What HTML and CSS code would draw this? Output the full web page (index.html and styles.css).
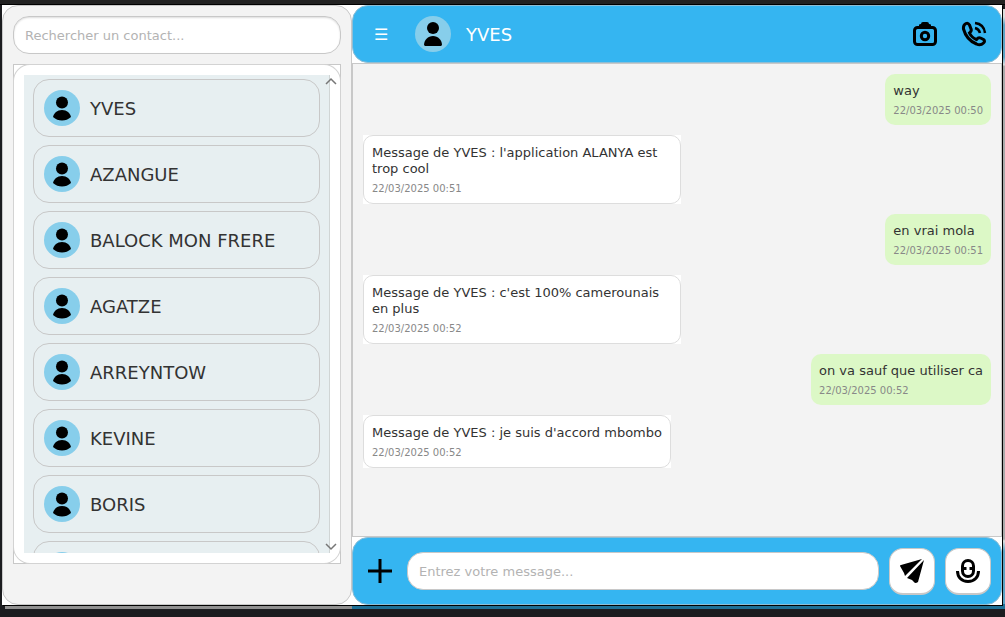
FILE: index.html
```html
<!DOCTYPE html>
<html lang="fr">
<head>
<meta charset="utf-8">
<title>Messagerie</title>
<link rel="stylesheet" href="styles.css">
</head>
<body>
<svg class="defs" aria-hidden="true">
  <symbol id="person" viewBox="0 0 36 36"><circle cx="18" cy="12.500" r="6"/><path d="M9 27c1-4 4-7 9-7s8 3 9 7q-4 3.500-9 3.500T9 27z"/></symbol>
</svg>
<div class="window">
  <aside class="sidebar">
    <input class="field" type="search" aria-label="Rechercher un contact" placeholder="Rechercher un contact...">
    <div class="list-frame">
      <div class="list-round">
        <div class="list">
          <button class="contact"><svg class="avatar"><use href="#person"/></svg>YVES</button>
          <button class="contact"><svg class="avatar"><use href="#person"/></svg>AZANGUE</button>
          <button class="contact"><svg class="avatar"><use href="#person"/></svg>BALOCK MON FRERE</button>
          <button class="contact"><svg class="avatar"><use href="#person"/></svg>AGATZE</button>
          <button class="contact"><svg class="avatar"><use href="#person"/></svg>ARREYNTOW</button>
          <button class="contact"><svg class="avatar"><use href="#person"/></svg>KEVINE</button>
          <button class="contact"><svg class="avatar"><use href="#person"/></svg>BORIS</button>
          <button class="contact" aria-label="Contact"><svg class="avatar"><use href="#person"/></svg></button>
        </div>
        <svg class="arrow arrow-up" viewBox="0 0 12 8"><path d="M1 7l5-5 5 5"/></svg>
        <svg class="arrow arrow-down" viewBox="0 0 12 8"><path d="M1 1l5 5 5-5"/></svg>
      </div>
    </div>
  </aside>
  <main class="chat">
    <header class="bar topbar">
      <button class="plain menu" aria-label="Menu">☰</button>
      <svg class="avatar" viewBox="0 0 36 36"><circle cx="18" cy="12" r="6"/><path d="M9 29c0-5 4-9 9-9s9 4 9 9l-1 1H10z"/></svg>
      <h1 class="name">YVES</h1>
      <button class="plain" aria-label="Caméra"><svg class="icon" viewBox="0 0 26 26"><path d="M7 7V4q0-1 2-1 0-2 2-2h4q2 0 2 2 2 0 2 1v3z"/><rect class="line" x="2.500" y="6.500" width="21" height="17" rx="3"/><circle class="line" cx="13" cy="15" r="3.700"/></svg></button>
      <button class="plain" aria-label="Appeler"><svg class="icon" viewBox="0 0 26 26"><path class="line" d="M5 2.500Q2 4 2.500 8q3 11 13 15 4 2 7-1 2-2 0-3.500l-3-1.500q-2-1-4 1.500-5-2-7-6.500 2.500-2 1.500-4L8.500 4Q7 1.500 5 2.500z"/><path class="line thin" d="M14 2q9 1 10 10M14 7q4 1 5 5"/></svg></button>
    </header>
    <section class="messages">
      <article class="bubble sent"><p>way</p><time>22/03/2025 00:50</time></article>
      <div class="corner"><article class="bubble received"><p>Message de YVES : l'application ALANYA est trop cool</p><time>22/03/2025 00:51</time></article></div>
      <article class="bubble sent"><p>en vrai mola</p><time>22/03/2025 00:51</time></article>
      <div class="corner"><article class="bubble received"><p>Message de YVES : c'est 100% camerounais en plus</p><time>22/03/2025 00:52</time></article></div>
      <article class="bubble sent"><p>on va sauf que utiliser ca</p><time>22/03/2025 00:52</time></article>
      <div class="corner"><article class="bubble received"><p>Message de YVES : je suis d'accord mbombo</p><time>22/03/2025 00:52</time></article></div>
    </section>
    <footer class="bar composer">
      <button class="plain" aria-label="Ajouter"><svg class="icon" viewBox="0 0 26 26"><path class="cross" d="M13 1v24M1 13h24"/></svg></button>
      <input class="field" type="text" aria-label="Message" placeholder="Entrez votre message...">
      <button class="tile" aria-label="Envoyer"><svg class="icon" viewBox="0 0 26 26"><path d="M1 8q0-1 1-1l21-6L6 18l-1-3zM25 2l-6 22q-1 1-3 1l-3-3-5-2z"/></svg></button>
      <button class="tile" aria-label="Micro"><svg class="icon" viewBox="0 0 26 26"><rect class="line" x="7.500" y="2.500" width="11" height="16" rx="5.500"/><path class="line" d="M7 10.500h4.500M14.500 10.500H19M2.500 13c0 6 4 10.500 10.500 10.500S23.500 19 23.500 13"/></svg></button>
    </footer>
  </main>
</div>
</body>
</html>
```
FILE: styles.css
```css
* { box-sizing: border-box; }
body {
  margin: 0;
  height: 100vh;
  padding: 5px 3px 12px 2px;
  overflow: hidden;
  background: linear-gradient(#222 4px, #000 4px 5px, #1b1c1f 5px);
  font-family: "DejaVu Sans", sans-serif;
  color: #333;
}
button, input { font: inherit; color: inherit; }
.defs { position: absolute; width: 0; height: 0; }
.window {
  position: relative;
  display: grid;
  grid-template-columns: 7fr 13fr;
  grid-template-rows: minmax(0, 1fr);
  height: 100%;
  background: #fff;
  box-shadow: 1px 1px 0 #000;
}
.window::before {
  content: "";
  position: absolute;
  z-index: -1;
  inset: 4px -3px -4px 3px;
  background:
    linear-gradient(90deg, #909090 347px, #1e7096 347px) bottom / 100% 5px no-repeat,
    linear-gradient(#ddd 8px, #5aa3c4 16px 48px, #ddd 56px, #aaa 57px 530px, #ddd 532px, #5aa3c4 542px);
}
.sidebar {
  display: flex;
  flex-direction: column;
  gap: 10px;
  min-width: 0;
  padding: 10px 10px 40px;
  border: 1px solid #c8c8c8;
  border-radius: 16px;
  background: #f3f3f3;
}
.field {
  width: 100%;
  min-width: 0;
  height: 38px;
  padding: 0 11px;
  border: 1px solid #c8c8c8;
  border-radius: 16px;
  outline: 0;
  background: #fff;
  font-size: 13px;
  appearance: none;
}
.field::placeholder { color: #b3b3b3; opacity: 1; }
.sidebar .field { flex: none; box-shadow: inset 0 1px 2px #ddd; }
.list-frame { flex: 1; min-height: 0; border: 1px solid #c8c8c8; background: #fff; }
.list-round { position: relative; height: 100%; padding: 10px; border-radius: 16px; box-shadow: 0 0 0 1px #d3d3d3; }
.list {
  display: flex;
  flex-direction: column;
  gap: 8px;
  height: 100%;
  padding: 4px 9px;
  overflow: hidden;
  border-right: 1px solid #d0d5d5;
  background: #e7eff1;
}
.contact {
  display: flex;
  flex: none;
  align-items: center;
  gap: 10px;
  height: 58px;
  padding: 0 10px;
  border: 1px solid #c8c8c8;
  border-radius: 16px;
  background: none;
  font-size: 18px;
}
.avatar { flex: none; width: 36px; height: 36px; border-radius: 50%; background: #87ceeb; color: #000; }
.arrow { position: absolute; right: 3px; width: 12px; height: 8px; fill: none; stroke: #777; stroke-width: 1.5; }
.arrow-up { top: 12px; }
.arrow-down { bottom: 12px; }
.chat { display: flex; flex-direction: column; min-width: 0; }
.bar { display: flex; flex: none; align-items: center; border: 1px solid #8ebdd4; border-radius: 16px; background: #35b5f1; }
.topbar { height: 58px; padding: 0 14px 0 21px; }
.name { flex: 1; margin: 0 0 0 15px; color: #fff; font-size: 18px; font-weight: 400; }
.plain { display: flex; padding: 0; border: 0; background: none; }
.menu { width: 41px; color: #fff; font-size: 16px; }
.topbar .plain + .plain { margin-left: 23px; }
.icon { width: 26px; height: 26px; fill: #000; }
.line { fill: none; stroke: #000; stroke-width: 3; }
.thin { stroke-width: 2.5; }
.cross { stroke: #000; stroke-width: 3; }
.messages {
  display: flex;
  flex: 1;
  flex-direction: column;
  align-items: flex-start;
  gap: 10px;
  min-height: 0;
  padding: 10px;
  overflow: hidden;
  border: 1px solid #c8c8c8;
  background: #f3f3f3;
}
.bubble { display: flex; flex-direction: column; gap: 5px; padding: 9px 8px 8px; border-radius: 10px; font-size: 13px; line-height: 16px; }
.bubble p { margin: 0; }
.bubble time { color: #888; font-size: 10px; line-height: 13px; }
.sent { align-self: flex-end; background: #dcf8c6; }
.corner { max-width: 318px; background: #fff; }
.received { border: 1px solid #ddd; background: #fff; }
.composer { gap: 10px; height: 68px; padding: 0 10px 0 14px; }
.composer .field { flex: 1; }
.composer .plain { margin-right: 4px; }
.tile {
  display: grid;
  flex: none;
  place-items: center;
  width: 46px;
  height: 47px;
  padding: 0;
  border: 1px solid #c8c8c8;
  border-bottom-width: 2px;
  border-radius: 14px;
  background: #fff;
}
```
